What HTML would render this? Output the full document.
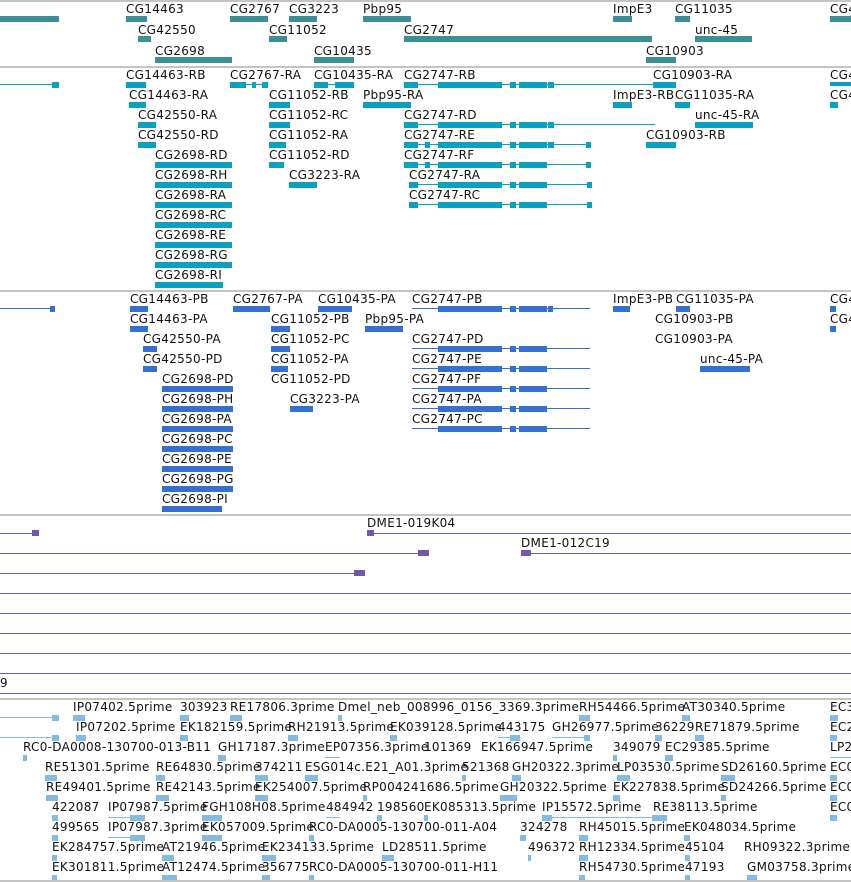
<!DOCTYPE html>
<html><head><meta charset="utf-8"><style>
body{margin:0;width:851px;height:882px;background:#fff;position:relative;overflow:hidden;font-family:"DejaVu Sans","Liberation Sans",sans-serif}
.l{position:absolute;font-size:12px;line-height:14px;white-space:nowrap;color:#111;letter-spacing:0.3px}
.b{position:absolute;height:6px}
.t{background:#3d8f94}.c{background:#0aa0c0}.u{background:#3370d0}.p{background:#7357a8}.k{background:#84bce0}
.n{position:absolute;height:1px}
.d{position:absolute;left:0;width:851px;height:2px;background:#c4c4c4}
</style></head><body>
<div class="d" style="top:0"></div>
<!-- section 1 -->
<div class="b t" style="left:0;top:16px;width:59px"></div>
<div class="l" style="left:126px;top:2px">CG14463</div><div class="b t" style="left:126px;top:16px;width:21px"></div>
<div class="l" style="left:230px;top:2px">CG2767</div><div class="b t" style="left:230px;top:16px;width:38px"></div>
<div class="l" style="left:289px;top:2px">CG3223</div><div class="b t" style="left:289px;top:16px;width:28px"></div>
<div class="l" style="left:363px;top:2px">Pbp95</div><div class="b t" style="left:363px;top:16px;width:48px"></div>
<div class="l" style="left:613px;top:2px">ImpE3</div><div class="b t" style="left:613px;top:16px;width:19px"></div>
<div class="l" style="left:675px;top:2px">CG11035</div><div class="b t" style="left:675px;top:16px;width:15px"></div>
<div class="l" style="left:830px;top:2px">CG4</div><div class="b t" style="left:830px;top:16px;width:21px"></div>
<div class="l" style="left:138px;top:23px">CG42550</div><div class="b t" style="left:138px;top:36px;width:13px"></div>
<div class="l" style="left:269px;top:23px">CG11052</div><div class="b t" style="left:269px;top:36px;width:18px"></div>
<div class="l" style="left:404px;top:23px">CG2747</div><div class="b t" style="left:404px;top:36px;width:248px"></div>
<div class="l" style="left:695px;top:23px">unc-45</div><div class="b t" style="left:695px;top:36px;width:57px"></div>
<div class="l" style="left:155px;top:44px">CG2698</div><div class="b t" style="left:155px;top:57px;width:77px"></div>
<div class="l" style="left:314px;top:44px">CG10435</div><div class="b t" style="left:314px;top:57px;width:40px"></div>
<div class="l" style="left:646px;top:44px">CG10903</div><div class="b t" style="left:646px;top:57px;width:30px"></div>
<div class="d" style="top:66px"></div>
<!-- section 2 -->
<div class="n c" style="left:0;top:84px;width:55px"></div><div class="b c" style="left:52px;top:82px;width:7px"></div>
<div class="l" style="left:126px;top:68px">CG14463-RB</div><div class="b c" style="left:126px;top:82px;width:20px"></div>
<div class="l" style="left:230px;top:68px">CG2767-RA</div><div class="n c" style="left:230px;top:84px;width:38px"></div><div class="b c" style="left:230px;top:82px;width:16px"></div><div class="b c" style="left:252px;top:82px;width:4px"></div><div class="b c" style="left:262px;top:82px;width:6px"></div>
<div class="l" style="left:314px;top:68px">CG10435-RA</div><div class="n c" style="left:314px;top:84px;width:40px"></div><div class="b c" style="left:314px;top:82px;width:14px"></div><div class="b c" style="left:335px;top:82px;width:19px"></div>
<div class="l" style="left:404px;top:68px">CG2747-RB</div><div class="n c" style="left:404px;top:84px;width:272px"></div><div class="b c" style="left:404px;top:82px;width:14px"></div><div class="b c" style="left:438px;top:82px;width:64px"></div><div class="b c" style="left:510px;top:82px;width:6px"></div><div class="b c" style="left:519px;top:82px;width:28px"></div><div class="b c" style="left:548px;top:82px;width:6px"></div><div class="b c" style="left:653px;top:82px;width:23px"></div>
<div class="l" style="left:653px;top:68px">CG10903-RA</div>
<div class="l" style="left:830px;top:68px">CG4</div><div class="b c" style="left:830px;top:82px;width:21px;height:4px"></div>
<div class="l" style="left:129px;top:88px">CG14463-RA</div><div class="b c" style="left:129px;top:102px;width:17px"></div>
<div class="l" style="left:269px;top:88px">CG11052-RB</div><div class="b c" style="left:269px;top:102px;width:21px"></div>
<div class="l" style="left:363px;top:88px">Pbp95-RA</div><div class="b c" style="left:363px;top:102px;width:48px"></div>
<div class="l" style="left:613px;top:88px">ImpE3-RB</div><div class="b c" style="left:613px;top:102px;width:19px"></div>
<div class="l" style="left:675px;top:88px">CG11035-RA</div><div class="b c" style="left:675px;top:102px;width:15px"></div>
<div class="l" style="left:830px;top:88px">CG4</div><div class="b c" style="left:830px;top:102px;width:8px"></div>
<div class="l" style="left:138px;top:108px">CG42550-RA</div><div class="b c" style="left:138px;top:122px;width:18px"></div>
<div class="l" style="left:269px;top:108px">CG11052-RC</div><div class="b c" style="left:269px;top:122px;width:21px"></div>
<div class="l" style="left:404px;top:108px">CG2747-RD</div><div class="n c" style="left:404px;top:124px;width:251px"></div><div class="b c" style="left:404px;top:122px;width:14px"></div><div class="b c" style="left:438px;top:122px;width:64px"></div><div class="b c" style="left:510px;top:122px;width:6px"></div><div class="b c" style="left:519px;top:122px;width:28px"></div><div class="b c" style="left:548px;top:122px;width:6px"></div>
<div class="l" style="left:695px;top:108px">unc-45-RA</div><div class="b c" style="left:695px;top:122px;width:58px"></div>
<div class="l" style="left:138px;top:128px">CG42550-RD</div><div class="b c" style="left:138px;top:142px;width:18px"></div>
<div class="l" style="left:269px;top:128px">CG11052-RA</div><div class="b c" style="left:269px;top:142px;width:17px"></div>
<div class="l" style="left:404px;top:128px">CG2747-RE</div><div class="n c" style="left:404px;top:144px;width:187px"></div><div class="b c" style="left:404px;top:142px;width:14px"></div><div class="b c" style="left:425px;top:142px;width:5px"></div><div class="b c" style="left:438px;top:142px;width:64px"></div><div class="b c" style="left:510px;top:142px;width:6px"></div><div class="b c" style="left:519px;top:142px;width:28px"></div><div class="b c" style="left:548px;top:142px;width:6px"></div><div class="b c" style="left:586px;top:142px;width:5px"></div>
<div class="l" style="left:646px;top:128px">CG10903-RB</div><div class="b c" style="left:646px;top:142px;width:30px"></div>
<div class="l" style="left:155px;top:148px">CG2698-RD</div><div class="b c" style="left:155px;top:162px;width:77px"></div>
<div class="l" style="left:269px;top:148px">CG11052-RD</div><div class="b c" style="left:269px;top:162px;width:15px"></div>
<div class="l" style="left:404px;top:148px">CG2747-RF</div><div class="n c" style="left:404px;top:164px;width:187px"></div><div class="b c" style="left:404px;top:162px;width:14px"></div><div class="b c" style="left:425px;top:162px;width:5px"></div><div class="b c" style="left:438px;top:162px;width:64px"></div><div class="b c" style="left:510px;top:162px;width:6px"></div><div class="b c" style="left:519px;top:162px;width:28px"></div><div class="b c" style="left:586px;top:162px;width:5px"></div>
<div class="l" style="left:155px;top:168px">CG2698-RH</div><div class="b c" style="left:155px;top:182px;width:77px"></div>
<div class="l" style="left:289px;top:168px">CG3223-RA</div><div class="b c" style="left:289px;top:182px;width:28px"></div>
<div class="l" style="left:409px;top:168px">CG2747-RA</div><div class="n c" style="left:409px;top:184px;width:183px"></div><div class="b c" style="left:409px;top:182px;width:9px"></div><div class="b c" style="left:438px;top:182px;width:64px"></div><div class="b c" style="left:510px;top:182px;width:6px"></div><div class="b c" style="left:519px;top:182px;width:28px"></div><div class="b c" style="left:587px;top:182px;width:5px"></div>
<div class="l" style="left:155px;top:188px">CG2698-RA</div><div class="b c" style="left:155px;top:202px;width:77px"></div>
<div class="l" style="left:409px;top:188px">CG2747-RC</div><div class="n c" style="left:409px;top:204px;width:183px"></div><div class="b c" style="left:409px;top:202px;width:9px"></div><div class="b c" style="left:438px;top:202px;width:64px"></div><div class="b c" style="left:510px;top:202px;width:6px"></div><div class="b c" style="left:519px;top:202px;width:28px"></div><div class="b c" style="left:587px;top:202px;width:5px"></div>
<div class="l" style="left:155px;top:208px">CG2698-RC</div><div class="b c" style="left:155px;top:222px;width:77px"></div>
<div class="l" style="left:155px;top:228px">CG2698-RE</div><div class="b c" style="left:155px;top:242px;width:77px"></div>
<div class="l" style="left:155px;top:248px">CG2698-RG</div><div class="b c" style="left:155px;top:262px;width:77px"></div>
<div class="l" style="left:155px;top:268px">CG2698-RI</div><div class="b c" style="left:155px;top:282px;width:68px"></div>
<div class="d" style="top:290px"></div>
<!-- section 3 -->
<div class="n u" style="left:0;top:308px;width:52px"></div><div class="b u" style="left:50px;top:306px;width:5px"></div>
<div class="l" style="left:130px;top:292px">CG14463-PB</div><div class="b u" style="left:130px;top:306px;width:18px"></div>
<div class="l" style="left:233px;top:292px">CG2767-PA</div><div class="b u" style="left:233px;top:306px;width:37px"></div>
<div class="l" style="left:318px;top:292px">CG10435-PA</div><div class="b u" style="left:318px;top:306px;width:34px"></div>
<div class="l" style="left:412px;top:292px">CG2747-PB</div><div class="n u" style="left:412px;top:308px;width:178px"></div><div class="b u" style="left:438px;top:306px;width:64px"></div><div class="b u" style="left:510px;top:306px;width:6px"></div><div class="b u" style="left:519px;top:306px;width:28px"></div><div class="b u" style="left:548px;top:306px;width:5px"></div>
<div class="l" style="left:613px;top:292px">ImpE3-PB</div><div class="b u" style="left:613px;top:306px;width:17px"></div>
<div class="l" style="left:676px;top:292px">CG11035-PA</div><div class="b u" style="left:676px;top:306px;width:14px"></div>
<div class="l" style="left:830px;top:292px">CG4</div><div class="b u" style="left:830px;top:306px;width:6px"></div>
<div class="l" style="left:130px;top:312px">CG14463-PA</div><div class="b u" style="left:130px;top:326px;width:18px"></div>
<div class="l" style="left:271px;top:312px">CG11052-PB</div><div class="b u" style="left:271px;top:326px;width:19px"></div>
<div class="l" style="left:365px;top:312px">Pbp95-PA</div><div class="b u" style="left:365px;top:326px;width:38px"></div>
<div class="l" style="left:655px;top:312px">CG10903-PB</div>
<div class="l" style="left:830px;top:312px">CG4</div><div class="b u" style="left:830px;top:326px;width:6px"></div>
<div class="l" style="left:143px;top:332px">CG42550-PA</div><div class="b u" style="left:143px;top:346px;width:14px"></div>
<div class="l" style="left:271px;top:332px">CG11052-PC</div><div class="b u" style="left:271px;top:346px;width:19px"></div>
<div class="l" style="left:412px;top:332px">CG2747-PD</div><div class="n u" style="left:412px;top:348px;width:178px"></div><div class="b u" style="left:438px;top:346px;width:64px"></div><div class="b u" style="left:510px;top:346px;width:6px"></div><div class="b u" style="left:519px;top:346px;width:28px"></div>
<div class="l" style="left:655px;top:332px">CG10903-PA</div>
<div class="l" style="left:143px;top:352px">CG42550-PD</div><div class="b u" style="left:143px;top:366px;width:14px"></div>
<div class="l" style="left:271px;top:352px">CG11052-PA</div><div class="b u" style="left:271px;top:366px;width:17px"></div>
<div class="l" style="left:412px;top:352px">CG2747-PE</div><div class="n u" style="left:412px;top:368px;width:178px"></div><div class="b u" style="left:438px;top:366px;width:64px"></div><div class="b u" style="left:510px;top:366px;width:6px"></div><div class="b u" style="left:519px;top:366px;width:28px"></div>
<div class="l" style="left:700px;top:352px">unc-45-PA</div><div class="b u" style="left:700px;top:366px;width:50px"></div>
<div class="l" style="left:162px;top:372px">CG2698-PD</div><div class="b u" style="left:162px;top:386px;width:71px"></div>
<div class="l" style="left:271px;top:372px">CG11052-PD</div>
<div class="l" style="left:412px;top:372px">CG2747-PF</div><div class="n u" style="left:412px;top:388px;width:178px"></div><div class="b u" style="left:438px;top:386px;width:64px"></div><div class="b u" style="left:510px;top:386px;width:6px"></div><div class="b u" style="left:519px;top:386px;width:28px"></div>
<div class="l" style="left:162px;top:392px">CG2698-PH</div><div class="b u" style="left:162px;top:406px;width:71px"></div>
<div class="l" style="left:290px;top:392px">CG3223-PA</div><div class="b u" style="left:290px;top:406px;width:23px"></div>
<div class="l" style="left:412px;top:392px">CG2747-PA</div><div class="n u" style="left:412px;top:408px;width:178px"></div><div class="b u" style="left:438px;top:406px;width:64px"></div><div class="b u" style="left:510px;top:406px;width:6px"></div><div class="b u" style="left:519px;top:406px;width:28px"></div>
<div class="l" style="left:162px;top:412px">CG2698-PA</div><div class="b u" style="left:162px;top:426px;width:71px"></div>
<div class="l" style="left:412px;top:412px">CG2747-PC</div><div class="n u" style="left:412px;top:428px;width:178px"></div><div class="b u" style="left:438px;top:426px;width:64px"></div><div class="b u" style="left:510px;top:426px;width:6px"></div><div class="b u" style="left:519px;top:426px;width:28px"></div>
<div class="l" style="left:162px;top:432px">CG2698-PC</div><div class="b u" style="left:162px;top:446px;width:71px"></div>
<div class="l" style="left:162px;top:452px">CG2698-PE</div><div class="b u" style="left:162px;top:466px;width:71px"></div>
<div class="l" style="left:162px;top:472px">CG2698-PG</div><div class="b u" style="left:162px;top:486px;width:71px"></div>
<div class="l" style="left:162px;top:492px">CG2698-PI</div><div class="b u" style="left:162px;top:506px;width:60px"></div>
<div class="d" style="top:514px"></div>
<!-- purple -->
<div class="n p" style="left:0;top:533px;width:36px"></div><div class="b p" style="left:32px;top:530px;width:7px"></div>
<div class="l" style="left:367px;top:516px">DME1-019K04</div><div class="n p" style="left:367px;top:533px;width:484px"></div><div class="b p" style="left:367px;top:530px;width:7px"></div>
<div class="n p" style="left:0;top:553px;width:425px"></div><div class="b p" style="left:418px;top:550px;width:11px"></div>
<div class="l" style="left:521px;top:536px">DME1-012C19</div><div class="n p" style="left:521px;top:553px;width:330px"></div><div class="b p" style="left:521px;top:550px;width:10px"></div>
<div class="n p" style="left:0;top:573px;width:360px"></div><div class="b p" style="left:354px;top:570px;width:11px"></div>
<div class="n p" style="left:0;top:593px;width:851px"></div>
<div class="n p" style="left:0;top:613px;width:851px"></div>
<div class="n p" style="left:0;top:633px;width:851px"></div>
<div class="n p" style="left:0;top:653px;width:851px"></div>
<div class="n p" style="left:0;top:673px;width:851px"></div>
<div class="l" style="left:0;top:676px">9</div>
<div class="n p" style="left:0;top:693px;width:851px"></div>
<div class="d" style="top:698px"></div>
<!-- bottom -->
<div class="n k" style="left:0;top:717px;width:55px"></div><div class="b k" style="left:52px;top:715px;width:7px"></div>
<div class="l" style="left:73px;top:700px">IP07402.5prime</div><div class="b k" style="left:73px;top:715px;width:12px"></div>
<div class="l" style="left:180px;top:700px">303923</div><div class="b k" style="left:180px;top:715px;width:9px"></div>
<div class="l" style="left:230px;top:700px">RE17806.3prime</div><div class="b k" style="left:230px;top:715px;width:12px"></div>
<div class="l" style="left:338px;top:700px">Dmel_neb_008996_0156_3369.3prime</div><div class="b k" style="left:338px;top:715px;width:4px"></div>
<div class="l" style="left:579px;top:700px">RH54466.5prime</div><div class="b k" style="left:579px;top:715px;width:11px"></div>
<div class="l" style="left:682px;top:700px">AT30340.5prime</div><div class="b k" style="left:682px;top:715px;width:8px"></div>
<div class="l" style="left:830px;top:700px">EC3</div><div class="b k" style="left:830px;top:715px;width:8px"></div>

<div class="n k" style="left:0;top:737px;width:55px"></div><div class="b k" style="left:52px;top:735px;width:7px"></div>
<div class="l" style="left:76px;top:720px">IP07202.5prime</div><div class="b k" style="left:76px;top:735px;width:10px"></div>
<div class="l" style="left:180px;top:720px">EK182159.5prime</div><div class="b k" style="left:180px;top:735px;width:8px"></div>
<div class="l" style="left:288px;top:720px">RH21913.5prime</div><div class="b k" style="left:288px;top:735px;width:10px"></div>
<div class="l" style="left:390px;top:720px">EK039128.5prime</div><div class="b k" style="left:390px;top:735px;width:7px"></div>
<div class="l" style="left:498px;top:720px">443175</div><div class="n k" style="left:498px;top:737px;width:22px"></div><div class="b k" style="left:510px;top:735px;width:10px"></div>
<div class="l" style="left:552px;top:720px">GH26977.5prime</div><div class="n k" style="left:552px;top:737px;width:38px"></div><div class="b k" style="left:584px;top:735px;width:6px"></div>
<div class="l" style="left:655px;top:720px">36229</div><div class="b k" style="left:655px;top:735px;width:7px"></div>
<div class="l" style="left:695px;top:720px">RE71879.5prime</div><div class="b k" style="left:695px;top:735px;width:9px"></div>
<div class="l" style="left:830px;top:720px">EC2</div><div class="b k" style="left:830px;top:735px;width:7px"></div>

<div class="l" style="left:23px;top:740px">RC0-DA0008-130700-013-B11</div><div class="b k" style="left:23px;top:755px;width:4px"></div>
<div class="l" style="left:218px;top:740px">GH17187.3prime</div><div class="b k" style="left:218px;top:755px;width:8px"></div>
<div class="l" style="left:325px;top:740px">EP07356.3prime</div><div class="n k" style="left:325px;top:757px;width:15px"></div>
<div class="l" style="left:424px;top:740px">101369</div>
<div class="l" style="left:481px;top:740px">EK166947.5prime</div>
<div class="l" style="left:613px;top:740px">349079</div><div class="b k" style="left:613px;top:755px;width:4px"></div>
<div class="l" style="left:665px;top:740px">EC29385.5prime</div><div class="b k" style="left:665px;top:755px;width:8px"></div>
<div class="l" style="left:830px;top:740px">LP2</div><div class="n k" style="left:830px;top:757px;width:21px"></div>

<div class="l" style="left:45px;top:760px">RE51301.5prime</div><div class="b k" style="left:45px;top:775px;width:12px"></div>
<div class="l" style="left:156px;top:760px">RE64830.5prime</div><div class="b k" style="left:156px;top:775px;width:9px"></div>
<div class="l" style="left:255px;top:760px">374211</div><div class="b k" style="left:255px;top:775px;width:13px"></div>
<div class="l" style="left:305px;top:760px">ESG014c.E21_A01.3prime</div><div class="b k" style="left:305px;top:775px;width:13px"></div>
<div class="l" style="left:462px;top:760px">521368</div><div class="b k" style="left:462px;top:775px;width:4px"></div>
<div class="l" style="left:512px;top:760px">GH20322.3prime</div><div class="b k" style="left:512px;top:775px;width:9px"></div>
<div class="l" style="left:617px;top:760px">LP03530.5prime</div><div class="b k" style="left:617px;top:775px;width:13px"></div>
<div class="l" style="left:721px;top:760px">SD26160.5prime</div><div class="b k" style="left:721px;top:775px;width:14px"></div>
<div class="l" style="left:830px;top:760px">EC0</div><div class="b k" style="left:830px;top:775px;width:7px"></div>

<div class="l" style="left:46px;top:780px">RE49401.5prime</div><div class="b k" style="left:46px;top:795px;width:12px"></div>
<div class="l" style="left:156px;top:780px">RE42143.5prime</div><div class="b k" style="left:156px;top:795px;width:13px"></div>
<div class="l" style="left:255px;top:780px">EK254007.5prime</div><div class="b k" style="left:255px;top:795px;width:13px"></div>
<div class="l" style="left:363px;top:780px">RP004241686.5prime</div><div class="b k" style="left:363px;top:795px;width:4px"></div>
<div class="l" style="left:500px;top:780px">GH20322.5prime</div><div class="b k" style="left:500px;top:795px;width:17px"></div>
<div class="l" style="left:613px;top:780px">EK227838.5prime</div><div class="b k" style="left:613px;top:795px;width:7px"></div>
<div class="l" style="left:721px;top:780px">SD24266.5prime</div><div class="b k" style="left:721px;top:795px;width:5px"></div>
<div class="l" style="left:830px;top:780px">EC0</div><div class="b k" style="left:830px;top:795px;width:7px"></div>

<div class="l" style="left:52px;top:800px">422087</div><div class="b k" style="left:52px;top:815px;width:6px"></div>
<div class="l" style="left:108px;top:800px">IP07987.5prime</div><div class="n k" style="left:108px;top:817px;width:37px"></div><div class="b k" style="left:130px;top:815px;width:15px"></div>
<div class="l" style="left:202px;top:800px">FGH108H08.5prime</div><div class="b k" style="left:202px;top:815px;width:20px"></div>
<div class="l" style="left:326px;top:800px">484942</div><div class="n k" style="left:326px;top:817px;width:14px"></div>
<div class="l" style="left:377px;top:800px">198560</div><div class="b k" style="left:377px;top:815px;width:5px"></div>
<div class="l" style="left:424px;top:800px">EK085313.5prime</div><div class="b k" style="left:424px;top:815px;width:4px"></div>
<div class="l" style="left:542px;top:800px">IP15572.5prime</div><div class="n k" style="left:542px;top:817px;width:125px"></div><div class="b k" style="left:542px;top:815px;width:10px"></div><div class="b k" style="left:652px;top:815px;width:15px"></div>
<div class="l" style="left:653px;top:800px">RE38113.5prime</div>
<div class="l" style="left:830px;top:800px">EC0</div><div class="b k" style="left:830px;top:815px;width:7px"></div>

<div class="l" style="left:52px;top:820px">499565</div><div class="b k" style="left:52px;top:835px;width:6px"></div>
<div class="l" style="left:108px;top:820px">IP07987.3prime</div><div class="n k" style="left:108px;top:837px;width:37px"></div><div class="b k" style="left:130px;top:835px;width:15px"></div>
<div class="l" style="left:202px;top:820px">EK057009.5prime</div><div class="b k" style="left:202px;top:835px;width:20px"></div>
<div class="l" style="left:309px;top:820px">RC0-DA0005-130700-011-A04</div><div class="b k" style="left:309px;top:835px;width:5px"></div>
<div class="l" style="left:520px;top:820px">324278</div><div class="b k" style="left:520px;top:835px;width:6px"></div>
<div class="l" style="left:579px;top:820px">RH45015.5prime</div><div class="b k" style="left:579px;top:835px;width:9px"></div>
<div class="l" style="left:684px;top:820px">EK048034.5prime</div><div class="b k" style="left:684px;top:835px;width:6px"></div>

<div class="l" style="left:52px;top:840px">EK284757.5prime</div><div class="b k" style="left:52px;top:855px;width:5px"></div>
<div class="l" style="left:162px;top:840px">AT21946.5prime</div><div class="b k" style="left:162px;top:855px;width:12px"></div>
<div class="l" style="left:262px;top:840px">EK234133.5prime</div><div class="b k" style="left:262px;top:855px;width:14px"></div>
<div class="l" style="left:382px;top:840px">LD28511.5prime</div><div class="b k" style="left:382px;top:855px;width:12px"></div>
<div class="l" style="left:528px;top:840px">496372</div><div class="b k" style="left:528px;top:855px;width:3px"></div>
<div class="l" style="left:579px;top:840px">RH12334.5prime</div><div class="b k" style="left:579px;top:855px;width:9px"></div>
<div class="l" style="left:685px;top:840px">45104</div><div class="b k" style="left:685px;top:855px;width:5px"></div>
<div class="l" style="left:744px;top:840px">RH09322.3prime</div>

<div class="l" style="left:52px;top:860px">EK301811.5prime</div><div class="b k" style="left:52px;top:875px;width:5px"></div>
<div class="l" style="left:162px;top:860px">AT12474.5prime</div><div class="b k" style="left:162px;top:875px;width:15px"></div>
<div class="l" style="left:262px;top:860px">356775</div><div class="b k" style="left:262px;top:875px;width:8px"></div>
<div class="l" style="left:309px;top:860px">RC0-DA0005-130700-011-H11</div><div class="b k" style="left:309px;top:875px;width:5px"></div>
<div class="l" style="left:579px;top:860px">RH54730.5prime</div><div class="b k" style="left:579px;top:875px;width:6px"></div>
<div class="l" style="left:685px;top:860px">47193</div><div class="b k" style="left:685px;top:875px;width:5px"></div>
<div class="l" style="left:747px;top:860px">GM03758.3prime</div><div class="b k" style="left:747px;top:875px;width:10px"></div>
<div class="d" style="top:880px"></div>
</body></html>
